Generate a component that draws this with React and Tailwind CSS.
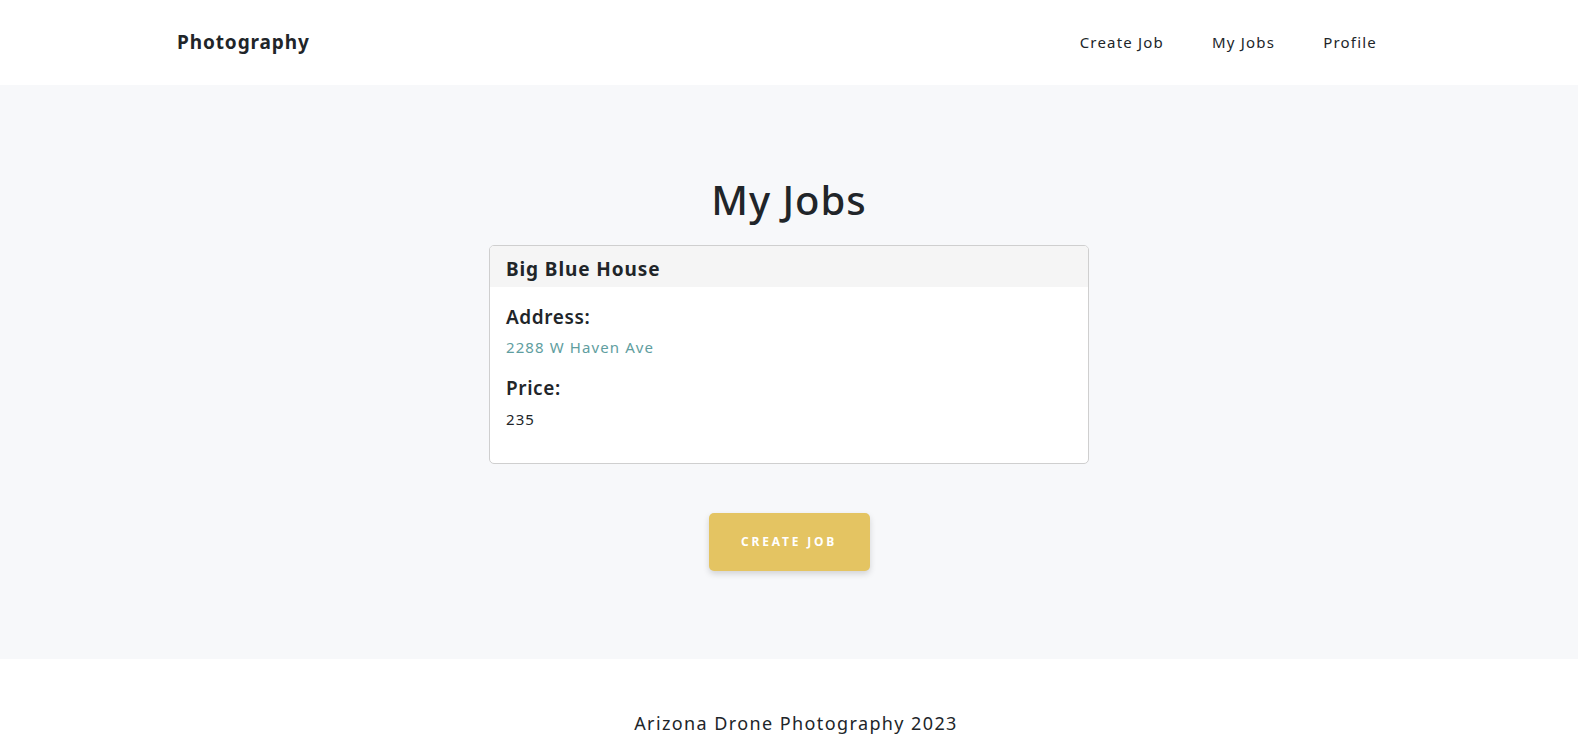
export default function App() {
  const font = { fontFamily: '"Noto Sans", "Open Sans", sans-serif' };
  return (
    <div className="min-h-[747px] flex flex-col text-[#212529]" style={font}>
      <header className="bg-white h-[85px] flex items-center">
        <div className="w-[1224px] mx-auto flex items-center justify-between">
          <span className="text-[19px] font-bold tracking-[0.9px]">Photography</span>
          <nav className="flex items-center text-[15px] tracking-[1.2px] text-[#212529]">
            <a className="px-6">Create Job</a>
            <a className="px-6">My Jobs</a>
            <a className="px-6">Profile</a>
          </nav>
        </div>
      </header>
      <main className="bg-[#f7f8fa] h-[574px] flex flex-col items-center pt-[91px]">
        <h1 className="text-[40px] font-medium leading-[1.2] mb-[21px] tracking-[1px]">My Jobs</h1>
        <div className="w-[600px] bg-white border border-[#cfcfcf] rounded-[5px] overflow-hidden">
          <div className="bg-[#f5f5f5] h-[41px] px-4 pt-[6px] flex items-center">
            <h2 className="text-[19px] font-bold tracking-[0.9px]">Big Blue House</h2>
          </div>
          <div className="px-4 pt-[19px] pb-[32px]">
            <h3 className="text-[19px] font-semibold leading-[1.2] tracking-[0.6px]">Address:</h3>
            <p className="text-[15px] text-[#5f9ea0] mt-[7px] tracking-[1.1px]">2288 W Haven Ave</p>
            <h3 className="text-[19px] font-semibold leading-[1.2] mt-[19px] tracking-[0.6px]">Price:</h3>
            <p className="text-[15px] mt-[8px] tracking-[1.1px]">235</p>
          </div>
        </div>
        <button className="mt-[49px] w-[161px] h-[58px] bg-[#e4c462] rounded-[5px] text-white text-[12px] font-bold tracking-[2.8px] shadow-[0_3px_6px_rgba(0,0,0,0.15)]">
          CREATE JOB
        </button>
      </main>
      <footer className="bg-white h-[88px] flex justify-center pt-[50px] pl-[14px]">
        <p className="text-[18px] tracking-[1.4px] leading-[28px]">Arizona Drone Photography 2023</p>
      </footer>
    </div>
  );
}
